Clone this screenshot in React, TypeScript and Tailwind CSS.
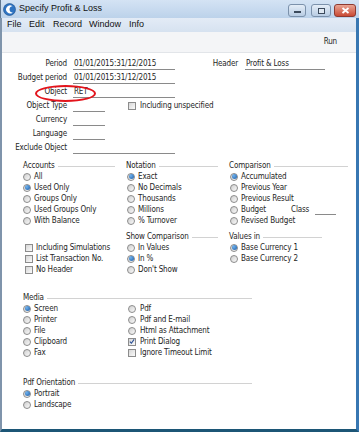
import React from "react";

const body = "font-['DejaVu_Sans_Condensed','DejaVu_Sans',sans-serif] font-stretch-condensed text-[8px] tracking-[-0.15px] text-[#1e1e1e]";

function Radio({ on }: { on?: boolean }) {
  return (
    <span className="flex h-[8px] w-[8px] shrink-0 items-center justify-center rounded-full border border-[#8c8c8c] bg-[linear-gradient(135deg,#cfcfcf,#fafafa)]">
      {on && <span className="h-[5px] w-[5px] rounded-full bg-[radial-gradient(circle_at_35%_35%,#6fb2ee,#1b5aa3)]" />}
    </span>
  );
}

function Check({ on }: { on?: boolean }) {
  return (
    <span className="flex h-[8px] w-[8px] shrink-0 items-center justify-center border border-[#8c8c8c] bg-[linear-gradient(135deg,#d6d6d6,#fbfbfb)]">
      {on && (
        <svg width="7" height="7" viewBox="0 0 7 7">
          <path d="M1 3.6 L2.8 5.5 L6 1" fill="none" stroke="#2a4f95" strokeWidth="1.3" />
        </svg>
      )}
    </span>
  );
}

function Opt({ label, on, box, gap = "gap-[3px]", indent = "" }: { label: string; on?: boolean; box?: boolean; gap?: string; indent?: string }) {
  return (
    <div className={`flex h-[11px] items-center whitespace-nowrap ${gap} ${indent}`}>
      {box ? <Check on={on} /> : <Radio on={on} />}
      <span>{label}</span>
    </div>
  );
}

function Head({ text, w }: { text: string; w: string }) {
  return (
    <div className={`flex h-[11px] items-center whitespace-nowrap ${w}`}>
      <span>{text}</span>
      <span className="ml-[3px] mt-[2px] h-px flex-1 bg-[#d2d2d2]" />
    </div>
  );
}

function Field({ w, value }: { w: string; value?: string }) {
  return <div className={`h-[11px] shrink-0 border-b border-[#8a8a8a] pl-[1px] leading-[10px] whitespace-nowrap ${w}`}>{value}</div>;
}

function FormRow({ label, children }: { label: string; children: React.ReactNode }) {
  return (
    <div className="flex h-[14px] items-center">
      <span className="w-[65px] shrink-0 text-right whitespace-nowrap">{label}</span>
      <div className="ml-[6px] flex shrink-0 items-center">{children}</div>
    </div>
  );
}

export default function App() {
  return (
    <div className="flex h-[432px] w-[359px] flex-col overflow-hidden bg-[#c5d9ee]">
      {/* title bar */}
      <div className="flex h-[18px] shrink-0 items-center border-l border-l-[#62788f] bg-[linear-gradient(#d4e3f4,#bcd2ea)] pl-[2px] font-['Liberation_Sans',sans-serif] text-[9px] text-[#111]">
        <svg width="13" height="13" viewBox="0 0 13 13" className="shrink-0">
          <circle cx="6.5" cy="6.5" r="6" fill="#2f74c2" stroke="#1d4f8a" strokeWidth="0.6" />
          <path d="M9.5 3.2 A4 4 0 1 0 9.8 9.4 A3 3 0 1 1 9.5 3.2 Z" fill="#ffffff" />
        </svg>
        <span className="ml-[3px]">Specify Profit &amp; Loss</span>
        <div className="flex-1" />
        <div className="mr-[3px] flex items-start self-start pt-[4px]">
          <div className="flex h-[13px] w-[18px] items-end justify-center rounded-[3px] border border-[#7b91ab] bg-[linear-gradient(#e4edf7,#b8cce3)] pb-[3px]">
            <span className="h-[2px] w-[7px] border border-[#3b4a5c] bg-white" />
          </div>
          <div className="ml-[5px] flex h-[13px] w-[20px] items-center justify-center rounded-[3px] border border-[#7b91ab] bg-[linear-gradient(#e4edf7,#b8cce3)]">
            <span className="h-[6px] w-[7px] border border-[#3b4a5c] bg-[#dfe8f2]" />
          </div>
          <div className="ml-[3px] flex h-[13px] w-[22px] items-center justify-center rounded-[3px] border border-[#8e3a30] bg-[linear-gradient(#eaa593,#c94a35)]">
            <svg width="9" height="7" viewBox="0 0 9 7">
              <path d="M1.5 1 L7.5 6 M7.5 1 L1.5 6" stroke="#fff" strokeWidth="1.8" />
            </svg>
          </div>
        </div>
      </div>

      <div className="flex flex-1 flex-col border-r-[3px] border-b-[3px] border-l-2 border-r-[#3877b2] border-b-[#1c5676] border-l-[#7f94ab] bg-white">
        {/* menu bar */}
        <div className="flex h-[14px] shrink-0 items-center bg-[linear-gradient(#e3ebf6,#d6e2f0)] pl-[5px] font-['Liberation_Sans',sans-serif] text-[9px] text-[#111]">
          <span className="w-[22px]">File</span>
          <span className="w-[24px]">Edit</span>
          <span className="w-[36px]">Record</span>
          <span className="w-[40px]">Window</span>
          <span>Info</span>
        </div>
        {/* toolbar */}
        <div className={`flex h-[21px] shrink-0 items-center justify-end border-b border-[#e2e5e9] bg-[#f4f5f7] pr-[19px] ${body}`}>
          Run
        </div>

        {/* content */}
        <div className={`relative flex-1 pt-[4px] ${body}`}>
          <div className="flex">
            <div className="w-[173px] shrink-0">
              <FormRow label="Period">
                <Field w="w-[102px]" value="01/01/2015:31/12/2015" />
              </FormRow>
              <FormRow label="Budget period">
                <Field w="w-[102px]" value="01/01/2015:31/12/2015" />
              </FormRow>
              <FormRow label="Object">
                <Field w="w-[102px]" value="RET" />
              </FormRow>
              <FormRow label="Object Type">
                <Field w="w-[32px]" />
                <div className="ml-[23px] flex items-center gap-[4px] whitespace-nowrap">
                  <Check />
                  <span>Including unspecified</span>
                </div>
              </FormRow>
              <FormRow label="Currency">
                <Field w="w-[32px]" />
              </FormRow>
              <FormRow label="Language">
                <Field w="w-[32px]" />
              </FormRow>
              <FormRow label="Exclude Object">
                <Field w="w-[102px]" />
              </FormRow>
            </div>
            <div className="flex h-[14px] items-center">
              <span className="w-[63px] text-right">Header</span>
              <div className="ml-[7px]">
                <Field w="w-[80px]" value="Profit & Loss" />
              </div>
            </div>
          </div>

          {/* red marker */}
          <div className="absolute left-[33px] top-[32px] h-[17px] w-[61px] rounded-[50%] border-2 border-[#e3141c]" />

          {/* option groups */}
          <div className="mt-[5px] flex pl-[21px]">
            <div className="w-[103px]">
              <Head text="Accounts" w="w-[92px]" />
              <Opt label="All" />
              <Opt label="Used Only" on />
              <Opt label="Groups Only" />
              <Opt label="Used Groups Only" />
              <Opt label="With Balance" />
              <div className="mt-[5px] h-[11px]" />
              <Opt label="Including Simulations" box indent="ml-[2px]" />
              <Opt label="List Transaction No." box indent="ml-[2px]" />
              <Opt label="No Header" box indent="ml-[2px]" />
            </div>
            <div className="w-[103px]">
              <Head text="Notation" w="w-[92px]" />
              <Opt label="Exact" on indent="ml-[1px]" />
              <Opt label="No Decimals" indent="ml-[1px]" />
              <Opt label="Thousands" indent="ml-[1px]" />
              <Opt label="Millions" indent="ml-[1px]" />
              <Opt label="% Turnover" indent="ml-[1px]" />
              <div className="mt-[5px]">
                <Head text="Show Comparison" w="w-[92px]" />
              </div>
              <Opt label="In Values" indent="ml-[1px]" />
              <Opt label="In %" on indent="ml-[1px]" />
              <Opt label="Don't Show" indent="ml-[1px]" />
            </div>
            <div className="w-[119px]">
              <Head text="Comparison" w="w-[119px]" />
              <Opt label="Accumulated" on indent="ml-[1px]" />
              <Opt label="Previous Year" indent="ml-[1px]" />
              <Opt label="Previous Result" indent="ml-[1px]" />
              <div className="flex h-[11px] items-center">
                <div className="w-[62px]">
                  <Opt label="Budget" indent="ml-[1px]" />
                </div>
                <span className="w-[24px]">Class</span>
                <Field w="w-[21px]" />
              </div>
              <Opt label="Revised Budget" indent="ml-[1px]" />
              <div className="mt-[5px]">
                <Head text="Values in" w="w-[93px]" />
              </div>
              <Opt label="Base Currency 1" on indent="ml-[1px]" />
              <Opt label="Base Currency 2" indent="ml-[1px]" />
            </div>
          </div>

          {/* media */}
          <div className="ml-[21px] mt-[17px] w-[229px]">
            <Head text="Media" w="w-[229px]" />
            <div className="flex">
              <div className="w-[105px]">
                <Opt label="Screen" on />
                <Opt label="Printer" />
                <Opt label="File" />
                <Opt label="Clipboard" />
                <Opt label="Fax" />
              </div>
              <div>
                <Opt label="Pdf" gap="gap-[4px]" />
                <Opt label="Pdf and E-mail" gap="gap-[4px]" />
                <Opt label="Html as Attachment" gap="gap-[4px]" />
                <Opt label="Print Dialog" box on gap="gap-[4px]" />
                <Opt label="Ignore Timeout Limit" box gap="gap-[4px]" />
              </div>
            </div>
            <div className="mt-[19px]">
              <Head text="Pdf Orientation" w="w-[229px]" />
            </div>
            <Opt label="Portrait" on />
            <Opt label="Landscape" />
          </div>
        </div>
      </div>
    </div>
  );
}
